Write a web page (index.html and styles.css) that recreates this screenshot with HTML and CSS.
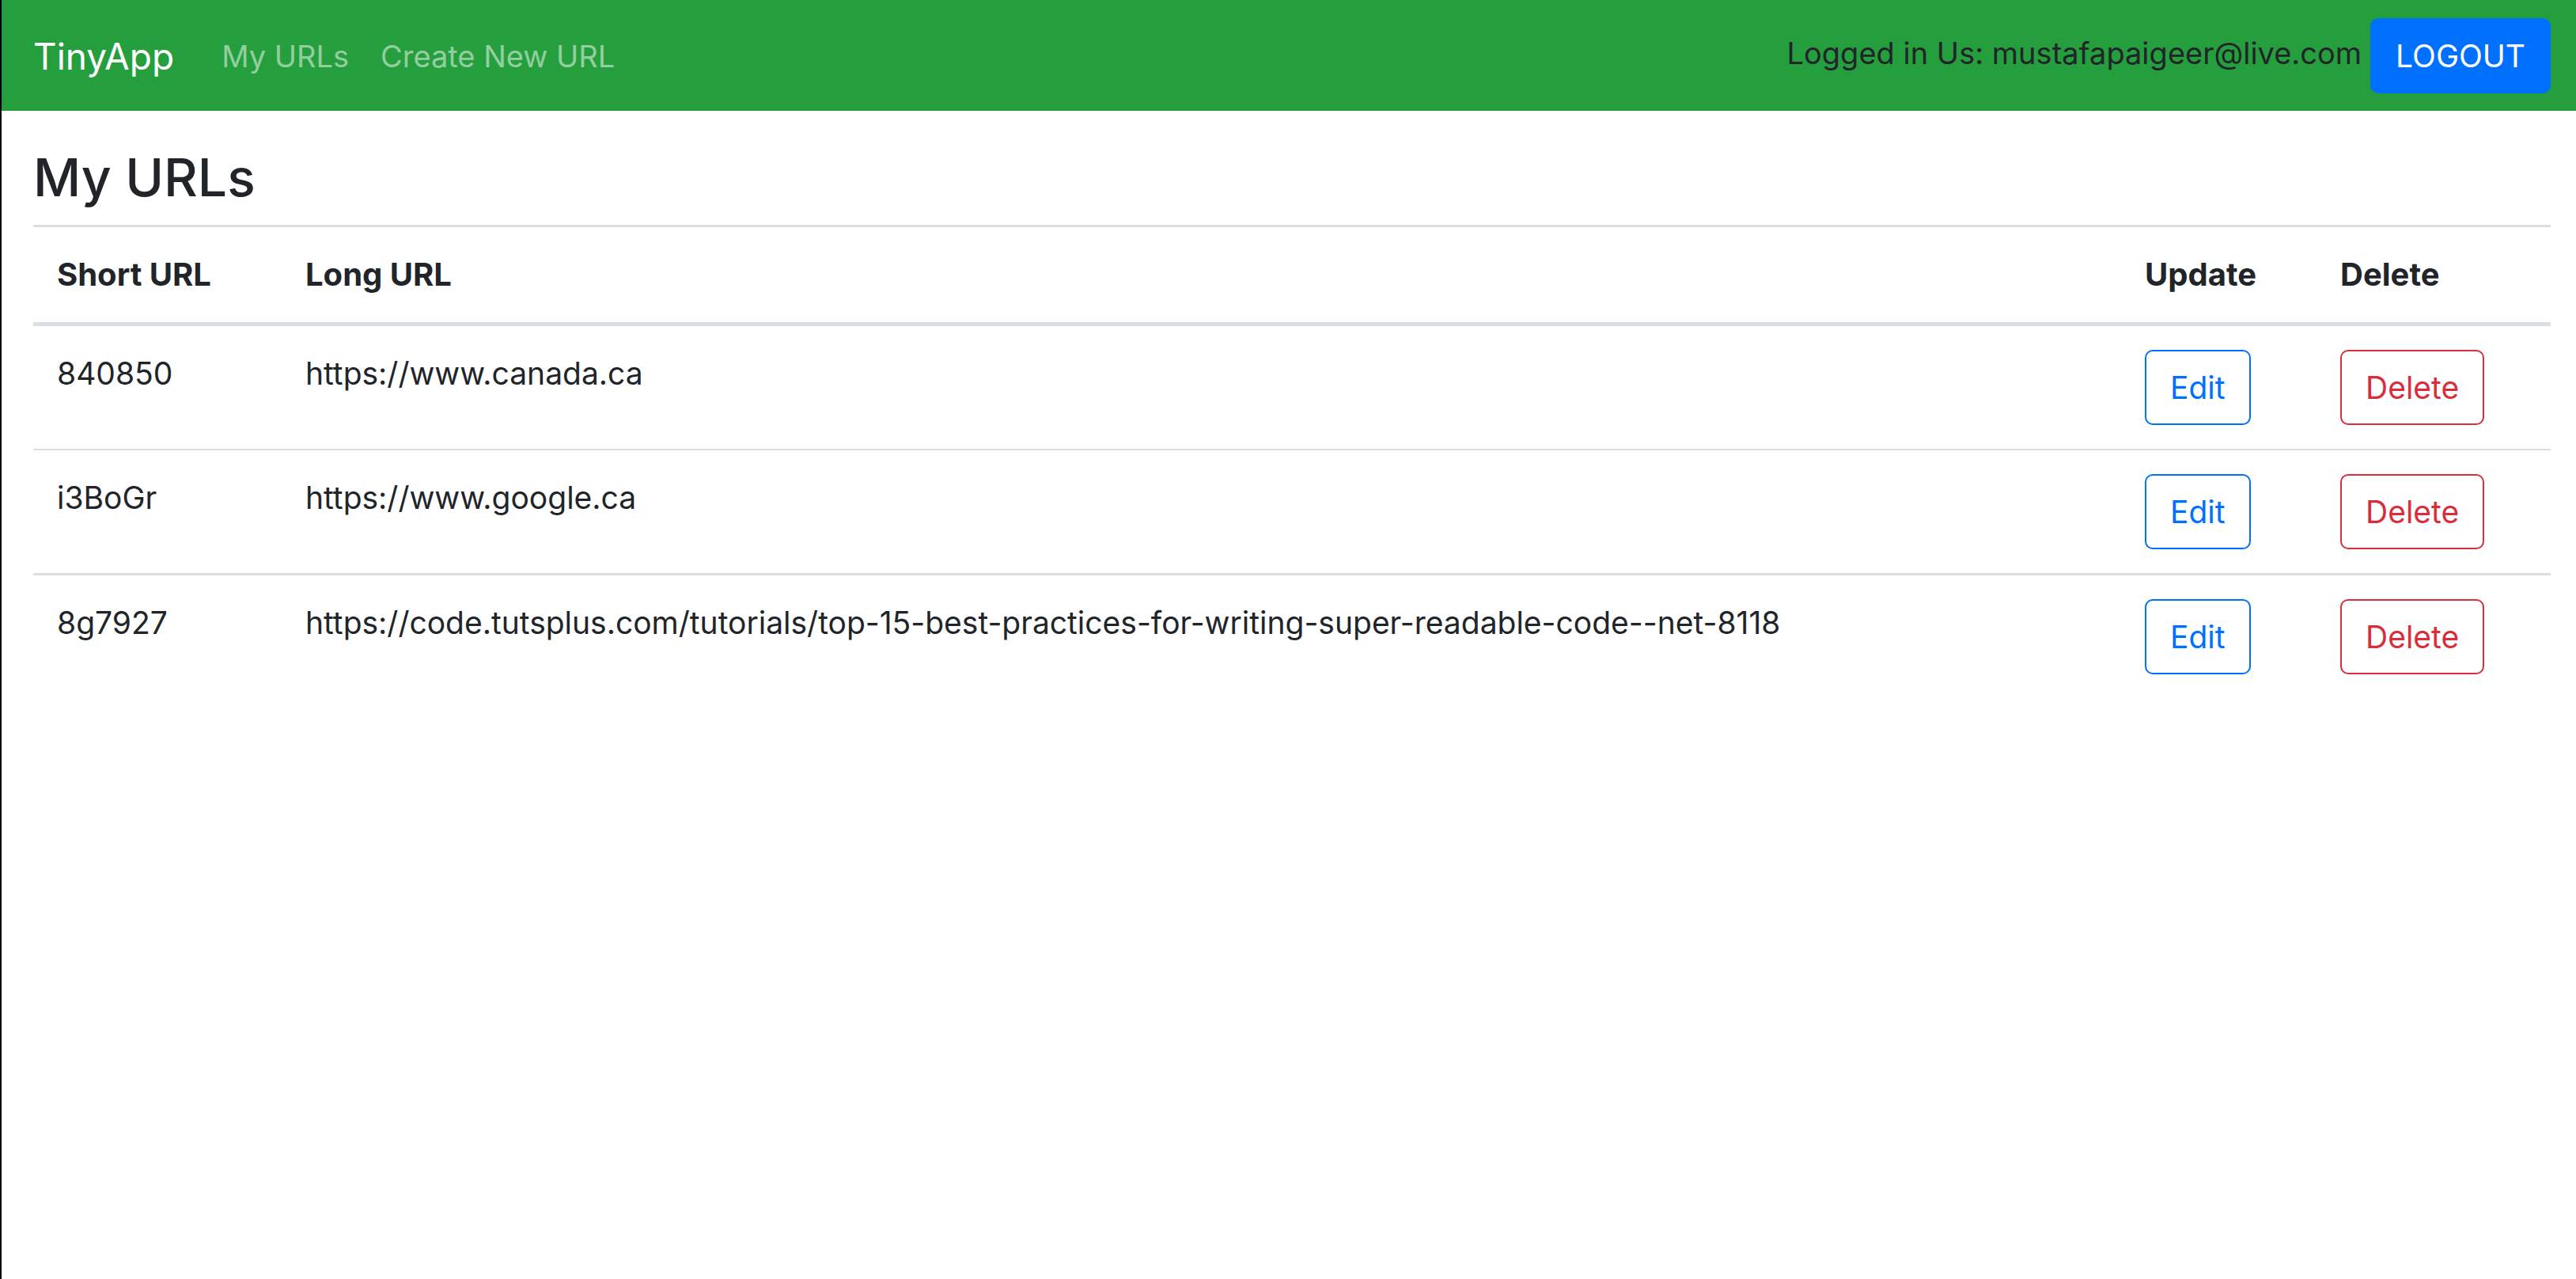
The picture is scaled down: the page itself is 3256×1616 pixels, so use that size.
FILE: index.html
```html
<!DOCTYPE html>
<html lang="en">
<head>
<meta charset="utf-8">
<title>TinyApp</title>
<link rel="stylesheet" href="styles.css">
</head>
<body>
<header class="navbar">
  <a class="brand" href="#">TinyApp</a>
  <nav class="nav">
    <a class="nav-link" href="#">My URLs</a>
    <a class="nav-link" href="#">Create New URL</a>
  </nav>
  <form class="session">
    <span class="user">Logged in Us: mustafapaigeer@live.com</span>
    <button class="btn btn-primary" type="button">LOGOUT</button>
  </form>
</header>
<main class="content">
  <h1 class="title">My URLs</h1>
  <table class="table">
    <colgroup><col class="col-short"><col><col class="col-update"><col class="col-delete"></colgroup>
    <thead>
      <tr><th scope="col">Short URL</th><th scope="col">Long URL</th><th scope="col">Update</th><th scope="col">Delete</th></tr>
    </thead>
    <tbody>
      <tr><td>840850</td><td>https://www.canada.ca</td><td><button class="btn btn-edit" type="button">Edit</button></td><td><button class="btn btn-delete" type="button">Delete</button></td></tr>
      <tr><td>i3BoGr</td><td>https://www.google.ca</td><td><button class="btn btn-edit" type="button">Edit</button></td><td><button class="btn btn-delete" type="button">Delete</button></td></tr>
      <tr><td>8g7927</td><td>https://code.tutsplus.com/tutorials/top-15-best-practices-for-writing-super-readable-code--net-8118</td><td><button class="btn btn-edit" type="button">Edit</button></td><td><button class="btn btn-delete" type="button">Delete</button></td></tr>
    </tbody>
  </table>
</main>
</body>
</html>
```
FILE: styles.css
```css
* { box-sizing: border-box; }
body {
  margin: 0;
  min-height: 100vh;
  border-left: 2px solid #000;
  background: #fff;
  color: #212529;
  font: 400 39px/60px Inter, sans-serif;
}
.navbar {
  display: flex;
  align-items: center;
  padding: 23px 32px 22px 40px;
  background: #259e3e;
}
.brand {
  margin-right: 40px;
  color: #fff;
  font-size: 46px;
  text-decoration: none;
}
.nav { display: flex; }
.nav-link {
  padding: 0 20px;
  color: rgba(255, 255, 255, .5);
  font-size: 38px;
  text-decoration: none;
}
.session {
  display: flex;
  align-items: center;
  gap: 11px;
  margin-left: auto;
}
.user {
  padding-bottom: 8px;
  font-size: 38px;
}
.btn {
  display: block;
  padding: 15px 30px;
  border: 2px solid;
  border-radius: 10px;
  background: #fff;
  font: inherit;
  line-height: 61px;
}
.btn-primary { border-color: #0070ff; background: #0070ff; color: #fff; }
.btn-edit { color: #0070ff; }
.btn-delete { color: #d92d3c; }
.content { padding: 40px 32px 40px 40px; }
.title {
  margin: 0 0 16px;
  font-size: 66px;
  font-weight: 500;
  line-height: 88px;
}
.table {
  width: 100%;
  table-layout: fixed;
  border-collapse: separate;
  border-spacing: 0;
}
.col-short { width: 314px; }
.col-update { width: 247px; }
.col-delete { width: 296px; }
th, td {
  padding: 30px;
  text-align: left;
  vertical-align: top;
}
th {
  border-top: 3px solid #dadfe3;
  border-bottom: 5px solid #dadfe3;
  font-size: 40px;
  font-weight: 700;
}
tr + tr td { border-top: 2px solid #dadfe3; }
tr + tr + tr td { border-top-width: 3px; }
```
